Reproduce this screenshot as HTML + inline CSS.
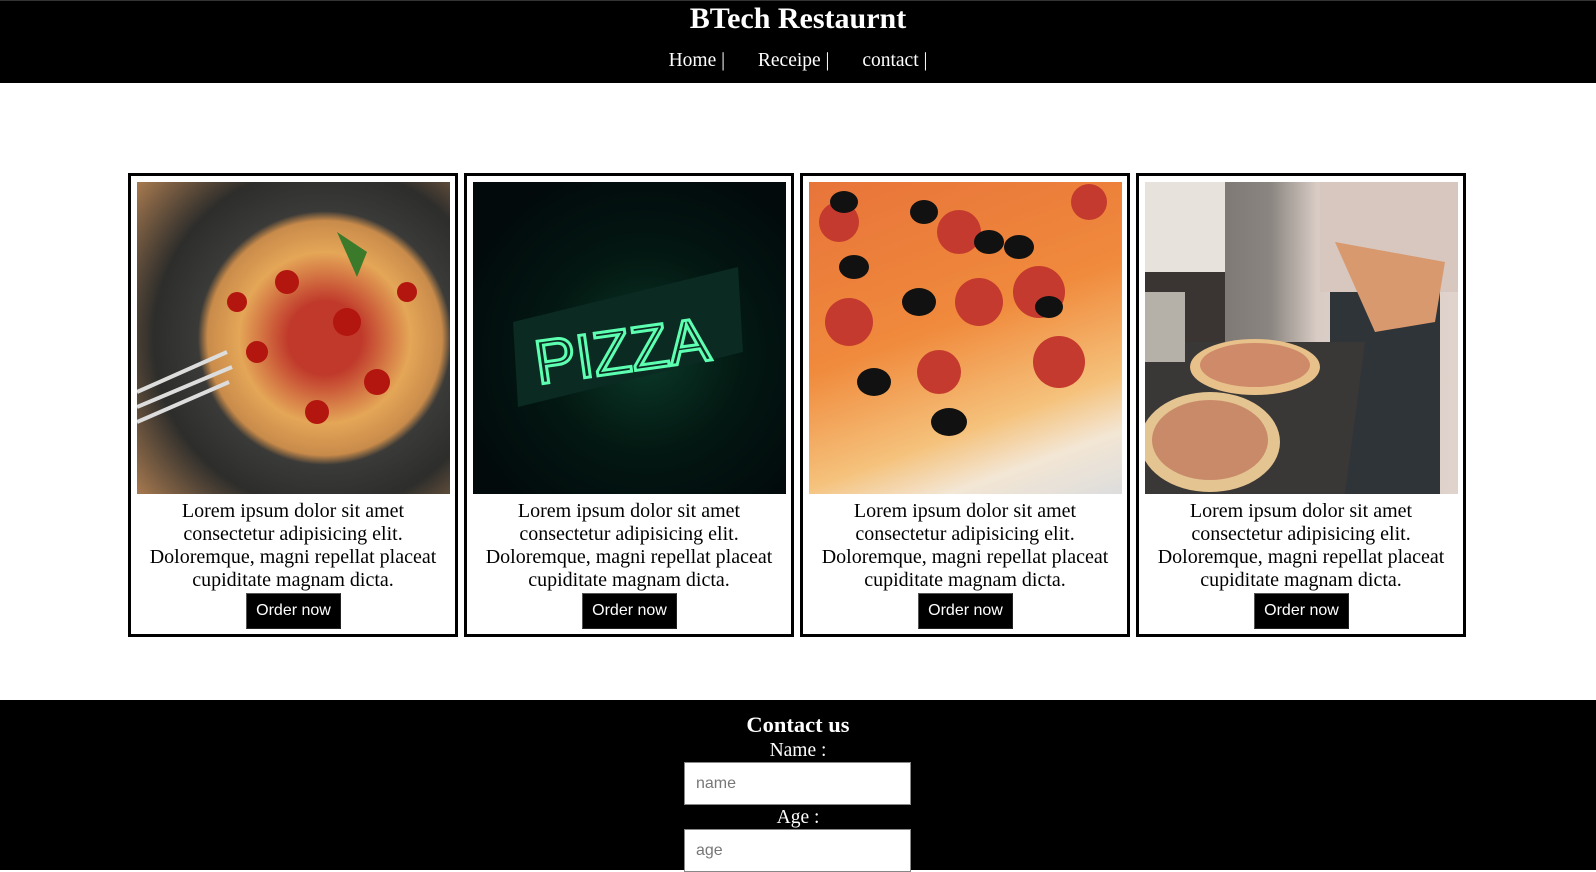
<!DOCTYPE html>
<html><head><style>
*{margin:0;padding:0;box-sizing:border-box}
html,body{width:1596px;height:870px;overflow:hidden;background:#fff;font-family:"Liberation Serif",serif}
.hdr{position:absolute;left:0;top:0;width:1596px;height:83px;background:#000;border-top:1px solid #333;color:#fff;text-align:center}
.hdr h1{position:absolute;left:0;right:0;top:1px;font-size:30px;line-height:34px;font-weight:bold}
.nav{position:absolute;left:0;right:0;top:49px;font-size:19.5px;line-height:22px}
.nav span{margin:0 14px}
.card{position:absolute;top:173px;width:330px;height:464px;border:3px solid #000;text-align:center}
.img{position:absolute;left:6px;top:6px;width:313px;height:312px;overflow:hidden}
.txt{position:absolute;left:-10px;right:-10px;top:324px;font-size:20px;line-height:23px;color:#000}
.btn{position:absolute;left:115px;top:417px;width:95px;height:36px;background:#000;color:#fff;font-family:"Liberation Sans",sans-serif;font-size:16px;line-height:34px;border:1px solid #555;border-right-color:#222;border-bottom-color:#222}
.ft{position:absolute;left:0;top:700px;width:1596px;height:170px;background:#000;color:#fff;text-align:center}
.ft h2{position:absolute;left:0;right:0;top:12px;font-size:22.5px;line-height:26px}
.lbl{position:absolute;left:0;right:0;font-size:19.5px;line-height:22px}
.inp{position:absolute;left:684px;width:227px;height:43px;background:#fff;border:1px solid #888;color:#777;font-family:"Liberation Sans",sans-serif;font-size:16px;line-height:41px;text-align:left;padding-left:11px}
</style></head><body>
<div class="hdr"><h1>BTech Restaurnt</h1><div class="nav"><span>Home |</span> <span>Receipe |</span> <span>contact |</span></div></div>

<div class="card" style="left:128px"><div class="img" style="background:radial-gradient(circle at 60% 50%,#c0392b 0 15%,#e4a657 35%,#c98b4a 48%,#3a3a38 52%,#2d2d2b 70%,#a87a50 100%)">
<svg width="313" height="312" style="position:absolute;left:0;top:0"><g fill="#b3150f"><circle cx="150" cy="100" r="12"/><circle cx="210" cy="140" r="14"/><circle cx="120" cy="170" r="11"/><circle cx="240" cy="200" r="13"/><circle cx="180" cy="230" r="12"/><circle cx="100" cy="120" r="10"/><circle cx="270" cy="110" r="10"/></g><path d="M200 50 l30 20 l-10 25 z" fill="#3a7a2a"/><path d="M0 210 L90 170 M0 225 L95 185 M0 240 L92 200" stroke="#ddd" stroke-width="4"/></svg></div>
<div class="txt">Lorem ipsum dolor sit amet<br>consectetur adipisicing elit.<br>Doloremque, magni repellat placeat<br>cupiditate magnam dicta.</div><div class="btn">Order now</div></div>

<div class="card" style="left:464px"><div class="img" style="background:radial-gradient(ellipse at 55% 55%,#0b3a2a 0,#031812 40%,#020a0c 80%)">
<svg width="313" height="312" style="position:absolute;left:0;top:0"><polygon points="40,140 265,85 270,170 45,225" fill="#0a2a22"/><text x="60" y="190" transform="rotate(-8 150 160)" font-family="Liberation Sans,sans-serif" font-size="62" fill="none" stroke="#5dffb0" stroke-width="3">PIZZA</text></svg></div>
<div class="txt">Lorem ipsum dolor sit amet<br>consectetur adipisicing elit.<br>Doloremque, magni repellat placeat<br>cupiditate magnam dicta.</div><div class="btn">Order now</div></div>

<div class="card" style="left:800px"><div class="img" style="background:linear-gradient(160deg,#e8743a 0%,#f08a3c 45%,#f5c27c 72%,#f3e6d4 85%,#ddd 100%)">
<svg width="313" height="312" style="position:absolute;left:0;top:0"><g fill="#c43a2e"><circle cx="30" cy="40" r="20"/><circle cx="150" cy="50" r="22"/><circle cx="230" cy="110" r="26"/><circle cx="40" cy="140" r="24"/><circle cx="170" cy="120" r="24"/><circle cx="250" cy="180" r="26"/><circle cx="130" cy="190" r="22"/><circle cx="280" cy="20" r="18"/></g><g fill="#111"><ellipse cx="35" cy="20" rx="14" ry="11"/><ellipse cx="115" cy="30" rx="14" ry="12"/><ellipse cx="180" cy="60" rx="15" ry="12"/><ellipse cx="45" cy="85" rx="15" ry="12"/><ellipse cx="110" cy="120" rx="17" ry="14"/><ellipse cx="210" cy="65" rx="15" ry="12"/><ellipse cx="65" cy="200" rx="17" ry="14"/><ellipse cx="140" cy="240" rx="18" ry="14"/><ellipse cx="240" cy="125" rx="14" ry="11"/></g></svg></div>
<div class="txt">Lorem ipsum dolor sit amet<br>consectetur adipisicing elit.<br>Doloremque, magni repellat placeat<br>cupiditate magnam dicta.</div><div class="btn">Order now</div></div>

<div class="card" style="left:1136px"><div class="img" style="background:linear-gradient(90deg,#6a6560 0%,#8a8580 40%,#d9ccc5 55%,#e0d3cc 100%)">
<svg width="313" height="312" style="position:absolute;left:0;top:0"><rect x="0" y="0" width="80" height="90" fill="#e8e2dc"/><rect x="0" y="90" width="80" height="80" fill="#3a3533"/><rect x="175" y="0" width="138" height="110" fill="#d8c7bf"/><rect x="185" y="110" width="110" height="202" fill="#2f3438"/><polygon points="0,160 220,160 200,312 0,312" fill="#3a3836"/><ellipse cx="110" cy="185" rx="65" ry="28" fill="#e7c08a"/><ellipse cx="110" cy="183" rx="55" ry="22" fill="#cf8a6a"/><ellipse cx="65" cy="260" rx="70" ry="50" fill="#e4c490"/><ellipse cx="65" cy="258" rx="58" ry="40" fill="#c98a6a"/><path d="M190 60 L300 80 L290 140 L230 150 Z" fill="#d8996e"/><rect x="0" y="110" width="40" height="70" fill="#b5b0a8"/></svg></div>
<div class="txt">Lorem ipsum dolor sit amet<br>consectetur adipisicing elit.<br>Doloremque, magni repellat placeat<br>cupiditate magnam dicta.</div><div class="btn">Order now</div></div>

<div class="ft"><h2>Contact us</h2>
<div class="lbl" style="top:40px">Name :</div>
<div class="inp" style="top:62px">name</div>
<div class="lbl" style="top:107px">Age :</div>
<div class="inp" style="top:129px">age</div></div>
</body></html>
